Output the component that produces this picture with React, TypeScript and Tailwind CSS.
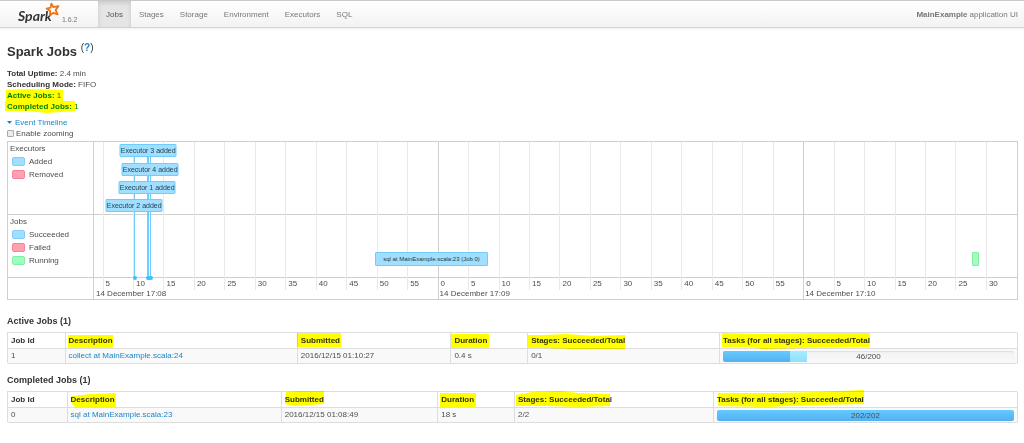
import type { ReactNode } from "react";

const tabs = ["Jobs", "Stages", "Storage", "Environment", "Executors", "SQL"];

// Visible window of the timeline, in seconds after 17:08:00
const START = 3.6;
const SPAN = 151.5;

const pct = (seconds: number) => `${(seconds / SPAN) * 100}%`;
const at = (seconds: number) => pct(seconds - START);

const ticks = Array.from({ length: 30 }, (_, i) => 5 + i * 5);

const dates = [
  { label: "14 December 17:08", time: START },
  { label: "14 December 17:09", time: 60 },
  { label: "14 December 17:10", time: 120 },
];

const executors = [
  { label: "Executor 3 added", time: 12.5, top: "top-[2px]" },
  { label: "Executor 4 added", time: 12.83, top: "top-[21px]" },
  { label: "Executor 1 added", time: 12.33, top: "top-[39px]" },
  { label: "Executor 2 added", time: 10.2, top: "top-[57px]" },
];

const swatches = {
  blue: "border-[#82ccf8] bg-[#a0dfff]",
  red: "border-[#f7819a] bg-[#ffa1b0]",
  green: "border-[#7df0a5] bg-[#a2fcc0]",
};

type Job = {
  id: number;
  description: string;
  submitted: string;
  duration: string;
  stages: string;
  done: number;
  running: number;
  total: number;
};

const activeJobs: Job[] = [
  {
    id: 1,
    description: "collect at MainExample.scala:24",
    submitted: "2016/12/15 01:10:27",
    duration: "0.4 s",
    stages: "0/1",
    done: 46,
    running: 12,
    total: 200,
  },
];

const completedJobs: Job[] = [
  {
    id: 0,
    description: "sql at MainExample.scala:23",
    submitted: "2016/12/15 01:08:49",
    duration: "18 s",
    stages: "2/2",
    done: 202,
    running: 0,
    total: 202,
  },
];

const headers = [
  "Description",
  "Submitted",
  "Duration",
  "Stages: Succeeded/Total",
  "Tasks (for all stages): Succeeded/Total",
];

// Highlighter strokes behind the header texts, drawn from each text's top left corner
const activeMarks = [
  "M-1 -1H44V12H-1Z",
  "M-4 -3H40V11H-4Z",
  "M-3 -2H35V12H-3Z",
  "M-3 -1L12 -1L36 -2L62 0L94 -1V13H40L10 12H-3Z",
  "M-1 -3L40 -2L90 -3H147V11L80 12L40 13L24 11H-1Z",
];

const completedMarks = [
  "M1 1L20 -1L45 -2V12H4L1 9Z",
  "M1 -3L12 -4H39V9L10 11L0 9Z",
  "M-1 -2H35V12H-1Z",
  "M-2 0L14 -3L42 -4L60 -2L92 -1V11L60 12L30 11H-2Z",
  "M1 -2L60 -2L100 -3L147 -5V9L100 10L50 12L1 11Z",
];

function Marker({ d, children }: { d: string; children: ReactNode }) {
  return (
    <span className="relative inline-block whitespace-nowrap">
      {children}
      <svg
        className="pointer-events-none absolute left-0 top-0 h-px w-px overflow-visible mix-blend-multiply"
        viewBox="0 0 1 1"
        aria-hidden="true"
      >
        <path d={d} fill="#ffff00" />
      </svg>
    </span>
  );
}

function Legend({ title, items }: { title: string; items: [string, keyof typeof swatches][] }) {
  return (
    <div className="px-0.5 leading-[13px]">
      <div>{title}</div>
      {items.map(([label, color]) => (
        <div key={label} className="flex items-center gap-1 pl-0.5">
          <span className={`h-[9px] w-[13px] rounded-[2px] border ${swatches[color]}`} />
          {label}
        </div>
      ))}
    </div>
  );
}

function Timeline() {
  return (
    <div className="flex h-[159px] border border-[#cfcfcf] text-[#4d4d4d]">
      <div className="w-[86px] shrink-0 border-r border-[#cfcfcf]">
        <div className="h-[73px] border-b border-[#cfcfcf]">
          <Legend title="Executors" items={[["Added", "blue"], ["Removed", "red"]]} />
        </div>
        <div className="h-[63px] border-b border-[#cfcfcf]">
          <Legend
            title="Jobs"
            items={[["Succeeded", "blue"], ["Failed", "red"], ["Running", "green"]]}
          />
        </div>
      </div>

      <div className="relative min-w-0 grow overflow-hidden">
        {/* Grid */}
        {ticks.map((t) => (
          <div
            key={t}
            className={
              t % 60 === 0
                ? "absolute top-0 h-full border-l border-[#cfcfcf]"
                : "absolute top-0 h-[148px] border-l border-[#e9e9e9]"
            }
            style={{ left: at(t) }}
          >
            <span className="absolute left-0.5 top-[137px] leading-[10px]">{t % 60}</span>
          </div>
        ))}
        <div className="h-[73px] border-b border-[#cfcfcf]" />
        <div className="h-[63px] border-b border-[#cfcfcf]" />
        {dates.map((d) => (
          <span
            key={d.label}
            className="absolute top-[147px] pl-0.5 leading-[10px] whitespace-nowrap"
            style={{ left: at(d.time) }}
          >
            {d.label}
          </span>
        ))}

        {/* Executor events */}
        {executors.map((e) => (
          <div
            key={e.label}
            className="absolute top-[3px] h-[132px] border-l border-[#6fcdfb]"
            style={{ left: at(e.time) }}
          >
            <span className="absolute -bottom-[3px] -left-[2px] size-[4px] rounded-full bg-[#3ebfff]" />
          </div>
        ))}
        {executors.map((e) => (
          <div
            key={e.label}
            className={`absolute flex h-[13px] w-[57px] -translate-x-1/2 items-center justify-center rounded-[1px] border border-[#6fcdfb] bg-[#a0dfff] text-[7px] whitespace-nowrap text-[#1f3b4a] ${e.top}`}
            style={{ left: at(e.time) }}
          >
            {e.label}
          </div>
        ))}

        {/* Jobs */}
        <div
          className="absolute top-[110px] flex h-[14px] items-center justify-center rounded-[1px] border border-[#6fcdfb] bg-[#a0dfff] text-[6px] whitespace-nowrap text-[#1f3b4a]"
          style={{ left: at(49.8), width: pct(18.4) }}
        >
          sql at MainExample.scala:23 (Job 0)
        </div>
        <div
          className="absolute top-[110px] h-[14px] rounded-[1px] border border-[#7df0a5] bg-[#a2fcc0]"
          style={{ left: at(147.7), width: pct(1.2) }}
        />
      </div>
    </div>
  );
}

function Progress({ done, running, total }: Pick<Job, "done" | "running" | "total">) {
  return (
    <div className="relative flex h-[11px] overflow-hidden rounded-[2px] bg-linear-to-b from-[#f2f2f2] to-[#f9f9f9] shadow-[inset_0_1px_1px_rgba(0,0,0,0.08)]">
      <div
        className="bg-linear-to-b from-[#64cbff] to-[#54b0f0]"
        style={{ width: `${(done / total) * 100}%` }}
      />
      <div
        className="bg-linear-to-b from-[#a4edff] to-[#94ddff]"
        style={{ width: `${(running / total) * 100}%` }}
      />
      <span className="absolute inset-0 text-center leading-[11px]">
        {done}/{total}
      </span>
    </div>
  );
}

function JobTable({ jobs, marks, cols }: { jobs: Job[]; marks: string[]; cols: string[] }) {
  return (
    <table className="w-full table-fixed border-separate border-spacing-0 rounded-[2px] border-r border-b border-[#dddddd]">
      <colgroup>
        {cols.map((c, i) => (
          <col key={i} className={c} />
        ))}
      </colgroup>
      <thead>
        <tr className="text-left leading-[10px] text-[#333333] *:h-[16px] *:border-t *:border-l *:border-[#dddddd] *:px-[3px] *:py-0">
          <th>Job Id</th>
          {headers.map((h, i) => (
            <th key={h}>
              <Marker d={marks[i]}>{h}</Marker>
            </th>
          ))}
        </tr>
      </thead>
      <tbody>
        {jobs.map((job) => (
          <tr
            key={job.id}
            className="bg-[#f9f9f9] leading-[10px] *:h-[15px] *:border-t *:border-l *:border-[#dddddd] *:px-[3px] *:py-0"
          >
            <td>{job.id}</td>
            <td>
              <a href="#" className="text-[#1a85c8]">
                {job.description}
              </a>
            </td>
            <td>{job.submitted}</td>
            <td>{job.duration}</td>
            <td>{job.stages}</td>
            <td>
              <Progress done={job.done} running={job.running} total={job.total} />
            </td>
          </tr>
        ))}
      </tbody>
    </table>
  );
}

function Logo() {
  return (
    <a href="#" className="flex w-[98px] items-center pl-[18px] text-[#777777]">
      <span className="relative pt-1 font-[Lato] text-[14px] leading-5 font-bold text-[#333333] italic">
        Spark
        <svg className="absolute top-0 left-[27px] size-[15px]" viewBox="0 0 15 15" aria-hidden="true">
          <path
            d="M6.4 1.6L8.4 5.2L13.4 4.2L10.6 8L12.6 12.4L8.4 10.8L5 13.2L5.2 9L1.6 6.6L5.6 5.6Z"
            fill="none"
            stroke="#e8751a"
            strokeWidth="1.8"
            strokeLinejoin="round"
          />
        </svg>
      </span>
      <span className="pt-2.5 pl-2.5 text-[7px]">1.6.2</span>
    </a>
  );
}

export default function App() {
  return (
    <div className="bg-white font-['Liberation_Sans',Arial,sans-serif] text-[8px] leading-[11px] text-[#4d4d4d]">
      <header className="flex h-7 justify-between border-t border-b border-t-[#c8c8c8] border-b-[#d4d4d4] bg-linear-to-b from-white to-[#f2f2f2] text-[#777777] shadow-[0_1px_3px_rgba(0,0,0,0.07)]">
        <div className="flex">
          <Logo />
          <nav className="flex">
            {tabs.map((tab) => (
              <a
                key={tab}
                href="#"
                className={
                  tab === "Jobs"
                    ? "flex items-center bg-[#e5e5e5] px-2 text-[#555555] shadow-[inset_0_2px_4px_rgba(0,0,0,0.125)]"
                    : "flex items-center px-2"
                }
              >
                {tab}
              </a>
            ))}
          </nav>
        </div>
        <p className="flex items-center gap-0.5 pr-1.5">
          <strong>MainExample</strong> application UI
        </p>
      </header>

      <main className="px-[7px] pr-1.5">
        <h1 className="pt-3.5 text-[13px] leading-5 font-bold text-[#333333]">
          Spark Jobs{" "}
          <sup className="text-[10px] font-normal">
            (
            <a href="#" className="font-bold text-[#1a85c8]">
              ?
            </a>
            )
          </sup>
        </h1>

        <ul className="pt-1.5">
          <li>
            <strong className="text-[#333333]">Total Uptime:</strong> 2.4 min
          </li>
          <li>
            <strong className="text-[#333333]">Scheduling Mode:</strong> FIFO
          </li>
          <li className="text-[#008000]">
            <Marker d="M-1 0L20 -1L56 0V11H-1Z">
              <strong>Active Jobs:</strong> 1
            </Marker>
          </li>
          <li className="text-[#008000]">
            <Marker d="M-2 0H68V10L40 12L20 10H-2Z">
              <strong>Completed Jobs:</strong> 1
            </Marker>
          </li>
        </ul>

        <button type="button" className="mt-[5px] flex items-center gap-[3px] text-[#1a85c8]">
          <svg className="h-[3px] w-[5px]" viewBox="0 0 5 3" aria-hidden="true">
            <path d="M0 0H5L2.5 3Z" fill="currentColor" />
          </svg>
          Event Timeline
        </button>
        <label className="flex items-center gap-0.5">
          <input
            type="checkbox"
            className="size-[7px] appearance-none rounded-[1px] border border-[#aaaaaa] bg-[#ececec]"
          />
          Enable zooming
        </label>

        <div className="pt-0.5">
          <Timeline />
        </div>

        <h2 className="pt-4 pb-[5px] text-[9px] font-bold text-[#333333]">Active Jobs (1)</h2>
        <JobTable
          jobs={activeJobs}
          marks={activeMarks}
          cols={["w-[5.7%]", "w-[23%]", "w-[15.2%]", "w-[7.6%]", "w-[19%]", "w-[29.5%]"]}
        />

        <h2 className="pt-[11px] pb-[5px] text-[9px] font-bold text-[#333333]">Completed Jobs (1)</h2>
        <JobTable
          jobs={completedJobs}
          marks={completedMarks}
          cols={["w-[5.9%]", "w-[21.2%]", "w-[15.5%]", "w-[7.6%]", "w-[19.7%]", "w-[30.1%]"]}
        />
      </main>
    </div>
  );
}
